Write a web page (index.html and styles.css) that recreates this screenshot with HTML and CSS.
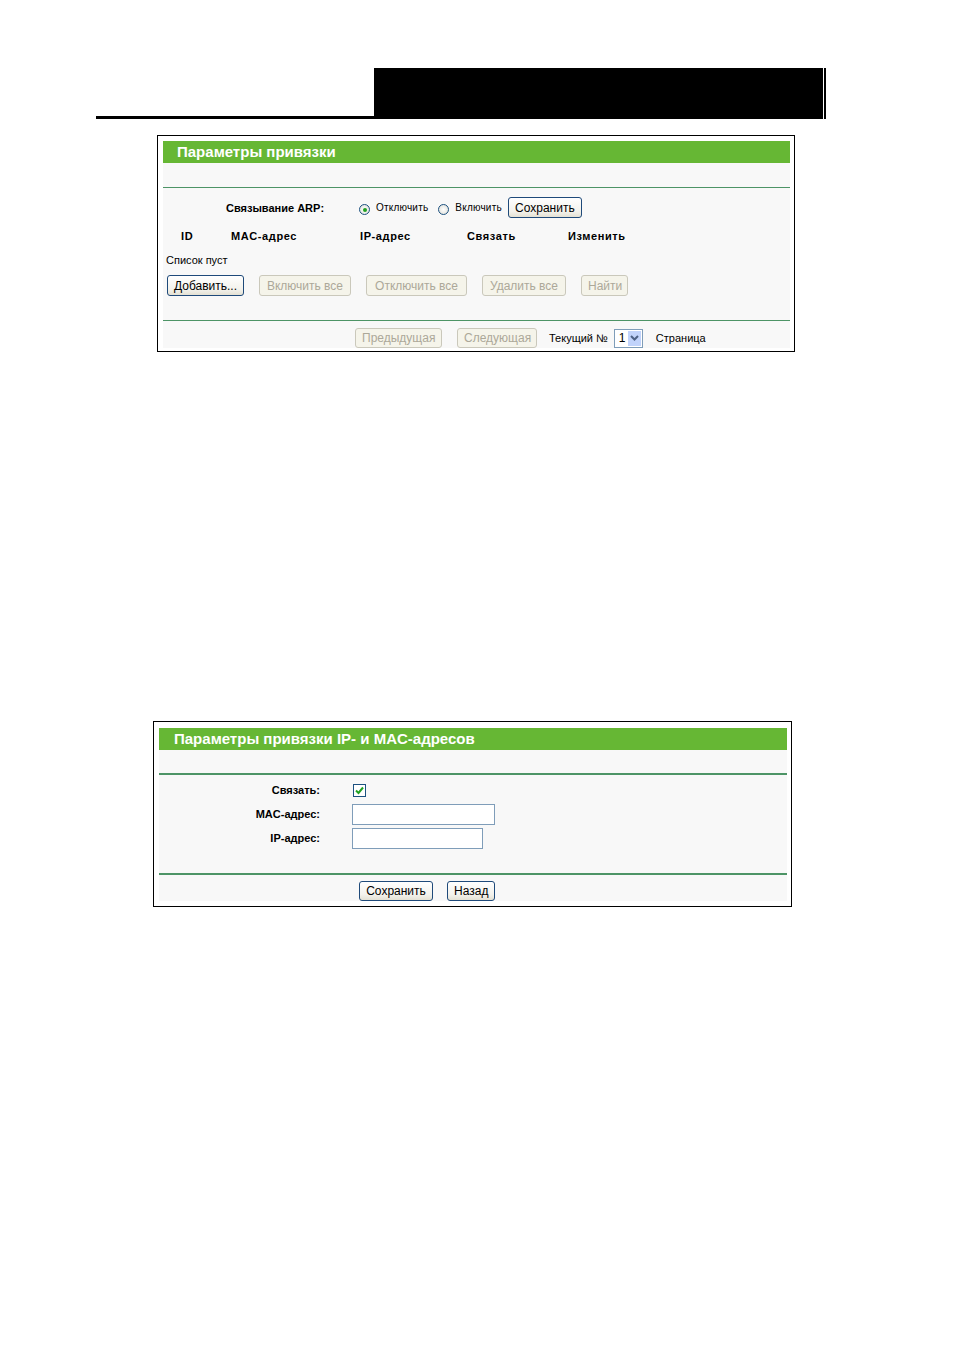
FILE: index.html
```html
<!DOCTYPE html>
<html lang="ru">
<head>
  <meta charset="UTF-8" />
  <title>Параметры привязки</title>
  <link rel="stylesheet" href="styles.css">
</head>
<body>
  <div class="page-head">
    <div class="head-left"></div>
    <div class="head-box"></div>
  </div>

  <!-- ARP binding list -->
  <div class="panel panel-list">
    <div class="panel-inner">
      <div class="title">Параметры привязки</div>
      <div class="rule"></div>

      <div class="arp-row">
        <span class="arp-label">Связывание ARP:</span>
        <span class="radio checked"></span>
        <span class="opt">Отключить</span>
        <span class="radio"></span>
        <span class="opt">Включить</span>
        <button class="btn btn-save">Сохранить</button>
      </div>

      <div class="cols">
        <span class="col-id">ID</span>
        <span class="col-mac">MAC-адрес</span>
        <span class="col-ip">IP-адрес</span>
        <span class="col-bind">Связать</span>
        <span class="col-edit">Изменить</span>
      </div>
      <div class="empty">Список пуст</div>

      <div class="actions">
        <button class="btn">Добавить...</button>
        <button class="btn" disabled>Включить все</button>
        <button class="btn" disabled>Отключить все</button>
        <button class="btn" disabled>Удалить все</button>
        <button class="btn" disabled>Найти</button>
      </div>

      <div class="rule rule-low"></div>

      <div class="pager">
        <button class="btn" disabled>Предыдущая</button>
        <button class="btn" disabled>Следующая</button>
        <span class="pager-label">Текущий №</span>
        <span class="select"><span class="select-val">1</span><span class="select-arrow"><svg width="9" height="6" viewBox="0 0 9 6"><path d="M1 1 L4.5 4.5 L8 1" fill="none" stroke="#4d6185" stroke-width="2"/></svg></span></span>
        <span class="pager-label">Страница</span>
      </div>
    </div>
  </div>

  <!-- add / edit entry -->
  <div class="panel panel-form">
    <div class="panel-inner">
      <div class="title">Параметры привязки IP- и MAC-адресов</div>
      <div class="rule rule-thick"></div>

      <div class="form">
        <label>Связать:</label>
        <span class="field"><span class="checkbox"><svg width="9" height="9" viewBox="0 0 9 9"><path d="M1 4.5 L3.5 7 L8 1.5" fill="none" stroke="#21a121" stroke-width="2"/></svg></span></span>
        <label>MAC-адрес:</label>
        <span class="field"><span class="input input-mac"></span></span>
        <label>IP-адрес:</label>
        <span class="field"><span class="input input-ip"></span></span>
      </div>

      <div class="rule rule-thick rule-form"></div>

      <div class="form-buttons">
        <button class="btn">Сохранить</button>
        <button class="btn">Назад</button>
      </div>
    </div>
  </div>
</body>
</html>
```

FILE: styles.css
```css
body {
  margin: 0;
  background: #fff;
  font-family: "Liberation Sans", Arial, sans-serif;
  font-size: 11px;
  color: #000;
}

.page-head {
  display: flex;
  margin: 68px 0 0 96px;
  width: 730px;
  height: 51px;
}

.head-left {
  width: 278px;
  border-bottom: 3px solid #000;
  box-sizing: border-box;
}

.head-box {
  flex: 1;
  background: #000;
  box-shadow: inset -2px 0 0 #000, inset -3px 0 0 #fff;
}

.panel {
  border: 1px solid #000;
  background: #fff;
  box-sizing: border-box;
}

.panel-list {
  width: 638px;
  margin: 16px 0 0 157px;
  padding: 5px 4px 3px 5px;
}

.panel-form {
  width: 639px;
  margin: 369px 0 0 153px;
  padding: 6px 4px 5px 5px;
}

.panel-inner {
  background: #f8f8f8;
}

.title {
  height: 22px;
  line-height: 22px;
  background: #66b734;
  color: #fff;
  font-weight: bold;
  font-size: 15px;
  padding-left: 14px;
}

.panel-form .title {
  padding-left: 15px;
}

.rule {
  height: 1px;
  margin-top: 24px;
  background: #4d9466;
}

.rule-thick {
  height: 2px;
  margin-top: 23px;
}

.rule-form {
  margin-top: 24px;
}

.btn {
  font-family: "Liberation Sans", Arial, sans-serif;
  font-size: 12px;
  height: 21px;
  padding: 0 6px;
  border: 1px solid #1f4a7a;
  border-radius: 3px;
  background: linear-gradient(#ffffff, #f3f2ec 70%, #e4e1d4);
  color: #000;
  box-sizing: border-box;
}

.btn:disabled {
  border-color: #cac8bb;
  background: #f5f4ea;
  color: #aca899;
}

/* ARP switch row */
.arp-row {
  display: flex;
  align-items: center;
  height: 21px;
  margin-top: 9px;
  padding-left: 63px;
}

.arp-label {
  font-weight: bold;
  width: 133px;
}

.radio {
  width: 11px;
  height: 11px;
  border: 1px solid #1c5180;
  border-radius: 50%;
  background: radial-gradient(#fff, #dcdcd5);
  box-sizing: border-box;
  position: relative;
  top: 2px;
  margin-right: 6px;
}

.radio.checked::after {
  content: "";
  position: absolute;
  left: 3px;
  top: 3px;
  width: 4px;
  height: 4px;
  border-radius: 50%;
  background: #21a121;
}

.opt {
  font-size: 10px;
  letter-spacing: 0.2px;
  margin-right: 10px;
}

.btn-save {
  width: 74px;
  margin-left: -4px;
}

/* list header */
.cols {
  display: flex;
  height: 24px;
  line-height: 24px;
  margin-top: 6px;
  padding-left: 18px;
  font-weight: bold;
  letter-spacing: 0.6px;
}

.col-id { width: 50px; }
.col-mac { width: 129px; }
.col-ip { width: 107px; }
.col-bind { width: 101px; }

.empty {
  height: 24px;
  line-height: 24px;
  padding-left: 3px;
}

.actions {
  display: flex;
  gap: 15px;
  margin-top: 3px;
  padding-left: 4px;
}

.actions .btn:nth-child(1) { width: 77px; }
.actions .btn:nth-child(2) { width: 92px; }
.actions .btn:nth-child(3) { width: 101px; }
.actions .btn:nth-child(4) { width: 84px; }
.actions .btn:nth-child(5) { width: 47px; }

/* paging */
.pager {
  display: flex;
  align-items: center;
  gap: 15px;
  height: 20px;
  margin-top: 7px;
  padding-left: 192px;
}

.pager .btn {
  height: 20px;
}

.pager .btn:nth-child(1) { width: 87px; }
.pager .btn:nth-child(2) { width: 80px; }

.pager-label {
  font-size: 11px;
  margin-left: -3px;
}

.select {
  display: flex;
  width: 29px;
  height: 19px;
  border: 1px solid #7f9db9;
  background: #fff;
  box-sizing: border-box;
  margin-left: -9px;
  margin-right: 1px;
}

.select-val {
  flex: 1;
  font-size: 12px;
  line-height: 17px;
  padding-left: 4px;
}

.select-arrow {
  width: 13px;
  margin: 1px;
  background: #c1d3fb;
  display: flex;
  align-items: center;
  justify-content: center;
}

/* entry form */
.form {
  display: grid;
  grid-template-columns: 161px auto;
  column-gap: 32px;
  row-gap: 3px;
  margin-top: 5px;
  font-weight: bold;
}

.form label {
  height: 21px;
  line-height: 21px;
  text-align: right;
}

.field {
  display: flex;
  align-items: center;
  height: 21px;
}

.checkbox {
  width: 11px;
  height: 11px;
  margin-left: 1px;
  border: 1px solid #1c5180;
  background: #fff;
  display: flex;
  align-items: center;
  justify-content: center;
}

.input {
  height: 21px;
  border: 1px solid #7f9db9;
  background: #fff;
  box-sizing: border-box;
}

.input-mac { width: 143px; }
.input-ip { width: 131px; }

.form-buttons {
  display: flex;
  gap: 14px;
  margin-top: 6px;
  padding-left: 200px;
}

.form-buttons .btn {
  height: 20px;
}

.form-buttons .btn:nth-child(1) { width: 74px; }
.form-buttons .btn:nth-child(2) { width: 48px; }
```
